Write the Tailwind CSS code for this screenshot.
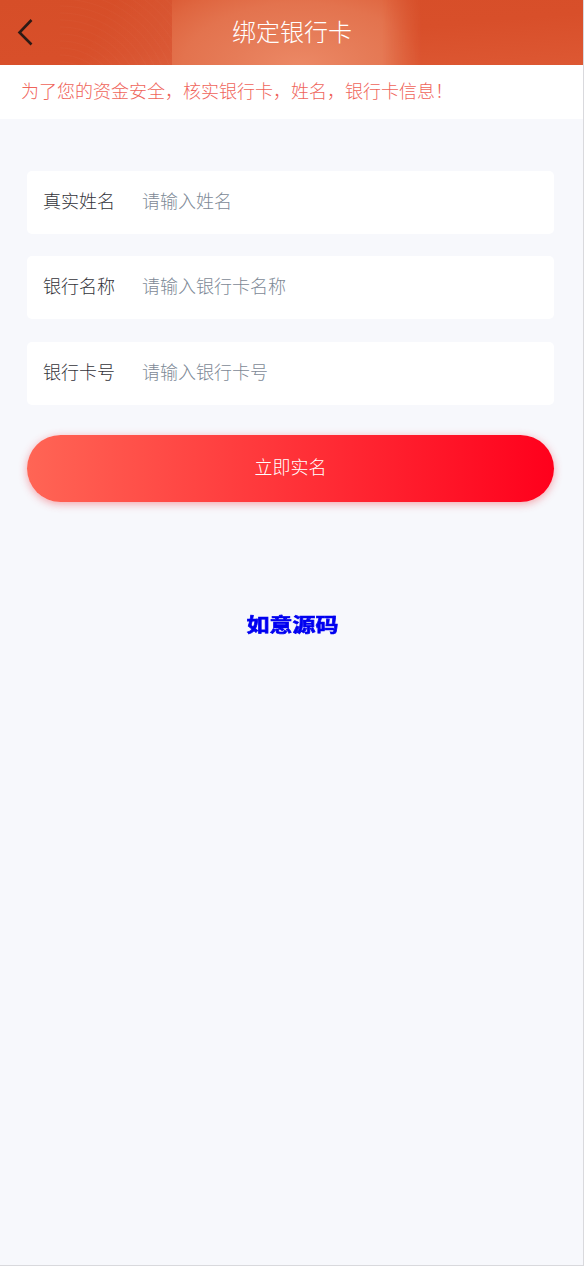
<!DOCTYPE html>
<html lang="zh-CN">
<head>
<meta charset="utf-8">
<title>绑定银行卡</title>
<script src="https://cdn.jsdelivr.net/npm/@tailwindcss/browser@4"></script>
</head>
<body class="m-0">
<div class="w-[584px] h-[1266px] flex flex-col bg-[#f7f8fc] border-r border-b border-[#d9d9dd] font-['Noto_Sans_CJK_SC',serif] font-light overflow-hidden">
  <header class="relative h-[65px] shrink-0 flex items-center justify-center overflow-hidden pb-[4px] bg-[linear-gradient(175deg,#d64e28_0%,#d84f2a_55%,#dd5833_100%)]">
    <div class="absolute left-[60px] top-0 w-[112px] h-[65px] bg-[repeating-radial-gradient(circle_at_0px_110px,rgba(255,255,255,0)_0px,rgba(255,255,255,0)_5px,rgba(255,255,255,0.018)_6px,rgba(255,255,255,0)_7px),linear-gradient(120deg,rgba(255,255,255,0)_35%,rgba(255,255,255,0.06)_100%)]"></div>
    <div class="absolute left-[172px] top-0 w-[250px] h-[65px] [mask-image:linear-gradient(90deg,#000_0%,#000_84%,transparent_100%)] bg-[radial-gradient(ellipse_190px_105px_at_128px_68px,#ec8966_0%,#e67c58_35%,#e3734e_62%,#df6640_82%,#da5731_100%)]"></div>
    <svg class="absolute left-[14px] top-[17px] w-[22px] h-[30px]" viewBox="0 0 22 30" fill="none" stroke="#2d1a15" stroke-width="2.600"><path d="M17.500 3 5.500 15.500 17.500 27.500"/></svg>
    <h1 class="relative text-[24px] font-light text-white leading-none ml-[1px]">绑定银行卡</h1>
  </header>
  <p class="h-[54px] shrink-0 bg-white pl-[21px] pt-[13px] text-[18px] leading-[24px] text-[#ef645a] whitespace-nowrap">为了您的资金安全，核实银行卡，姓名，银行卡信息！</p>
  <main class="px-[27px] pr-[29px] pt-[52px] flex flex-col">
    <div class="h-[63px] flex items-center bg-white rounded-[5px] pl-[16px] pb-[4px] text-[18px]">
      <span class="w-[99px] text-[#33333a]">真实姓名</span><span class="text-[#7d8996]">请输入姓名</span>
    </div>
    <div class="h-[63px] mt-[22px] flex items-center bg-white rounded-[5px] pl-[16px] pb-[4px] text-[18px]">
      <span class="w-[99px] text-[#33333a]">银行名称</span><span class="text-[#7d8996]">请输入银行卡名称</span>
    </div>
    <div class="h-[63px] mt-[23px] flex items-center bg-white rounded-[5px] pl-[16px] pb-[4px] text-[18px]">
      <span class="w-[99px] text-[#33333a]">银行卡号</span><span class="text-[#7d8996]">请输入银行卡号</span>
    </div>
    <button class="h-[67px] mt-[30px] rounded-full pb-[4px] bg-[linear-gradient(90deg,#ff6555,#ff001c)] shadow-[0_2px_8px_rgba(240,60,70,0.45)] text-white text-[18px]">立即实名</button>
    <div class="mt-[107px] pl-[4px] text-center text-[23px] leading-[30px] font-bold text-[#0000f0] [-webkit-text-stroke:0.8px_#0000f0] scale-y-[0.82]">如意源码</div>
  </main>
</div>
</body>
</html>
